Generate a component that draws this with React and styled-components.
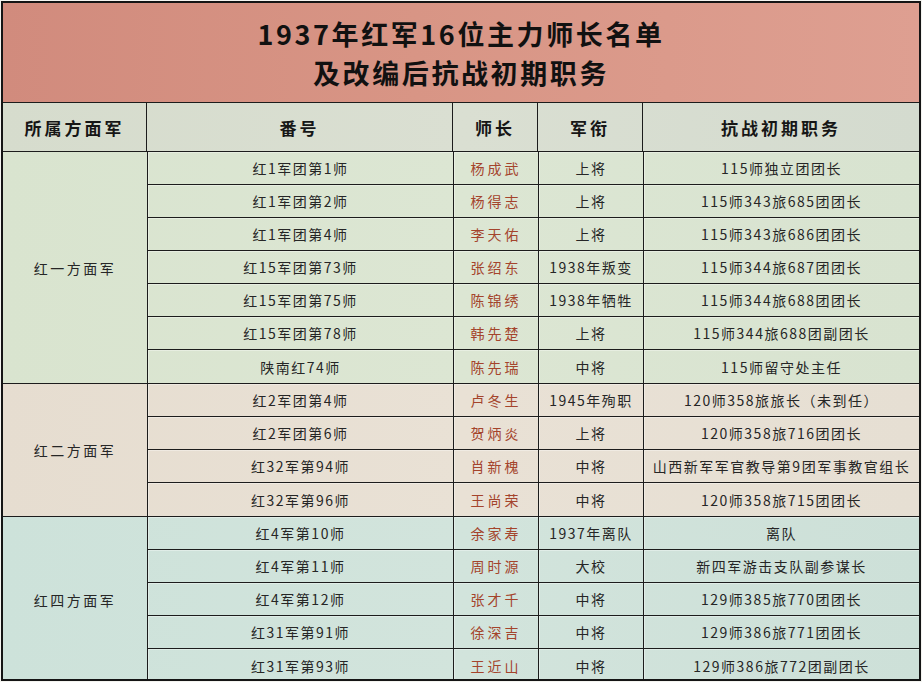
import React from "react";
import styled, { createGlobalStyle } from "styled-components";

const GlobalStyle = createGlobalStyle`
  html, body {
    margin: 0;
    padding: 0;
    background: #f4f4f0;
  }
  body {
    font-family: "Noto Sans CJK SC", "Noto Sans", sans-serif;
    color: #262626;
  }
`;

const groups = [
  {
    name: "红一方面军",
    tone: "green",
    rows: [
      ["红1军团第1师", "杨成武", "上将", "115师独立团团长"],
      ["红1军团第2师", "杨得志", "上将", "115师343旅685团团长"],
      ["红1军团第4师", "李天佑", "上将", "115师343旅686团团长"],
      ["红15军团第73师", "张绍东", "1938年叛变", "115师344旅687团团长"],
      ["红15军团第75师", "陈锦绣", "1938年牺牲", "115师344旅688团团长"],
      ["红15军团第78师", "韩先楚", "上将", "115师344旅688团副团长"],
      ["陕南红74师", "陈先瑞", "中将", "115师留守处主任"],
    ],
  },
  {
    name: "红二方面军",
    tone: "beige",
    rows: [
      ["红2军团第4师", "卢冬生", "1945年殉职", "120师358旅旅长（未到任）"],
      ["红2军团第6师", "贺炳炎", "上将", "120师358旅716团团长"],
      ["红32军第94师", "肖新槐", "中将", "山西新军军官教导第9团军事教官组长"],
      ["红32军第96师", "王尚荣", "中将", "120师358旅715团团长"],
    ],
  },
  {
    name: "红四方面军",
    tone: "teal",
    rows: [
      ["红4军第10师", "余家寿", "1937年离队", "离队"],
      ["红4军第11师", "周时源", "大校", "新四军游击支队副参谋长"],
      ["红4军第12师", "张才千", "中将", "129师385旅770团团长"],
      ["红31军第91师", "徐深吉", "中将", "129师386旅771团团长"],
      ["红31军第93师", "王近山", "中将", "129师386旅772团副团长"],
    ],
  },
];

const tones = {
  green: "linear-gradient(90deg, #d9e4cf, #dce6d3 50%, #d8e3d0)",
  beige: "linear-gradient(90deg, #e6ddd0, #e9e1d5 50%, #e6dfd3)",
  teal: "linear-gradient(90deg, #cde2da, #d2e4dc 50%, #cde0d8)",
};

const COLS = "306px 85px 105px 1fr";
const LINE = "1.5px solid #1c1c1c";

export default function App() {
  return (
    <>
      <GlobalStyle />
      <Frame>
        <TitleBar>
          <TitleLine>1937年红军16位主力师长名单</TitleLine>
          <TitleLine>及改编后抗战初期职务</TitleLine>
        </TitleBar>
        <HeaderRow>
          <HeadCell>所属方面军</HeadCell>
          <HeadCell>番号</HeadCell>
          <HeadCell>师长</HeadCell>
          <HeadCell>军衔</HeadCell>
          <HeadCell $last>抗战初期职务</HeadCell>
        </HeaderRow>
        {groups.map((g, gi) => (
          <Group key={g.name} $tone={g.tone} $last={gi === groups.length - 1}>
            <GroupLabel>{g.name}</GroupLabel>
            <Rows>
              {g.rows.map((r, ri) => (
                <Row key={r[0]} $last={ri === g.rows.length - 1}>
                  <Cell>{r[0]}</Cell>
                  <Cell $name>{r[1]}</Cell>
                  <Cell>{r[2]}</Cell>
                  <Cell $last>{r[3]}</Cell>
                </Row>
              ))}
            </Rows>
          </Group>
        ))}
      </Frame>
    </>
  );
}

const Frame = styled.div`
  box-sizing: border-box;
  width: 920px;
  height: 680px;
  margin: 1px 0 0 1px;
  border: 2px solid #151515;
  display: flex;
  flex-direction: column;
  overflow: hidden;
`;

const TitleBar = styled.div`
  height: 99px;
  flex: none;
  display: flex;
  flex-direction: column;
  align-items: center;
  justify-content: center;
  gap: 6px;
  background: linear-gradient(90deg, #d18b7d, #d89585 45%, #de9f91);
  border-bottom: ${LINE};
`;

const TitleLine = styled.div`
  font-size: 27px;
  font-weight: 700;
  letter-spacing: 2.6px;
  line-height: 33px;
  color: #111;
`;

const HeaderRow = styled.div`
  height: 48px;
  flex: none;
  display: grid;
  grid-template-columns: 144px ${COLS};
  background: linear-gradient(90deg, #d6dccd, #dadfd2 50%, #d4dbcf);
  border-bottom: ${LINE};
`;

const HeadCell = styled.div`
  display: flex;
  align-items: center;
  justify-content: center;
  font-size: 17px;
  font-weight: 700;
  letter-spacing: 3px;
  color: #161616;
  border-right: ${(p) => (p.$last ? "none" : LINE)};
`;

const Group = styled.div`
  display: flex;
  background: ${(p) => tones[p.$tone]};
  border-bottom: ${(p) => (p.$last ? "none" : LINE)};
`;

const GroupLabel = styled.div`
  width: 144px;
  flex: none;
  display: flex;
  align-items: center;
  justify-content: center;
  font-size: 14px;
  letter-spacing: 2.5px;
  border-right: ${LINE};
`;

const Rows = styled.div`
  flex: 1;
  display: flex;
  flex-direction: column;
`;

const Row = styled.div`
  height: 33px;
  box-sizing: border-box;
  display: grid;
  grid-template-columns: ${COLS};
  border-bottom: ${(p) => (p.$last ? "none" : LINE)};
`;

const Cell = styled.div`
  display: flex;
  align-items: center;
  justify-content: center;
  font-size: 14px;
  white-space: nowrap;
  letter-spacing: ${(p) => (p.$name ? "3px" : "1.5px")};
  color: ${(p) => (p.$name ? "#a4442c" : "#262626")};
  border-right: ${(p) => (p.$last ? "none" : LINE)};
  box-shadow: inset 1px 1px 0 rgba(255, 255, 255, 0.35);
`;
